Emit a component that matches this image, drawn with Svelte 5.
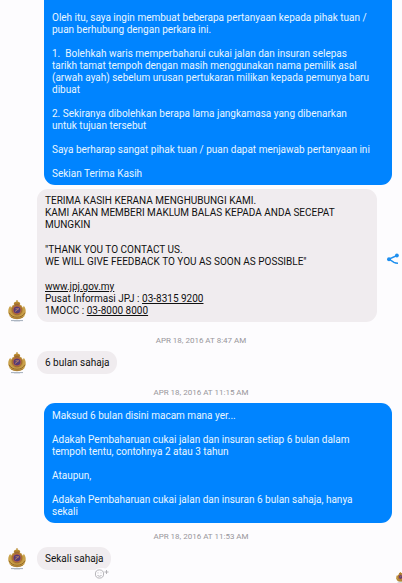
<script lang="ts">
  type Part = { text: string; href?: string };
  type Entry = {
    kind: 'sent' | 'received' | 'time';
    paragraphs: Part[][];
    clipped?: boolean;
    share?: boolean;
    react?: boolean;
  };

  const entries: Entry[] = [
    {
      kind: 'sent',
      clipped: true,
      paragraphs: [
        [{ text: 'Oleh itu, saya ingin membuat beberapa pertanyaan kepada pihak tuan /\npuan berhubung dengan perkara ini.' }],
        [{ text: '1.  Bolehkah waris memperbaharui cukai jalan dan insuran selepas\ntarikh tamat tempoh dengan masih menggunakan nama pemilik asal\n(arwah ayah) sebelum urusan pertukaran milikan kepada pemunya baru\ndibuat' }],
        [{ text: '2. Sekiranya dibolehkan berapa lama jangkamasa yang dibenarkan\nuntuk tujuan tersebut' }],
        [{ text: 'Saya berharap sangat pihak tuan / puan dapat menjawab pertanyaan ini' }],
        [{ text: 'Sekian Terima Kasih' }],
      ],
    },
    {
      kind: 'received',
      share: true,
      paragraphs: [
        [{ text: 'TERIMA KASIH KERANA MENGHUBUNGI KAMI.\nKAMI AKAN MEMBERI MAKLUM BALAS KEPADA ANDA SECEPAT\nMUNGKIN' }],
        [{ text: '"THANK YOU TO CONTACT US.\nWE WILL GIVE FEEDBACK TO YOU AS SOON AS POSSIBLE"' }],
        [
          { text: 'www.jpj.gov.my', href: 'http://www.jpj.gov.my' },
          { text: '\nPusat Informasi JPJ : ' },
          { text: '03-8315 9200', href: 'tel:0383159200' },
          { text: '\n1MOCC : ' },
          { text: '03-8000 8000', href: 'tel:0380008000' },
        ],
      ],
    },
    { kind: 'time', paragraphs: [[{ text: 'APR 18, 2016 AT 8:47 AM' }]] },
    { kind: 'received', paragraphs: [[{ text: '6 bulan sahaja' }]] },
    { kind: 'time', paragraphs: [[{ text: 'APR 18, 2016 AT 11:15 AM' }]] },
    {
      kind: 'sent',
      paragraphs: [
        [{ text: 'Maksud 6 bulan disini macam mana yer...' }],
        [{ text: 'Adakah Pembaharuan cukai jalan dan insuran setiap 6 bulan dalam\ntempoh tentu, contohnya 2 atau 3 tahun' }],
        [{ text: 'Ataupun,' }],
        [{ text: 'Adakah Pembaharuan cukai jalan dan insuran 6 bulan sahaja, hanya\nsekali' }],
      ],
    },
    { kind: 'time', paragraphs: [[{ text: 'APR 18, 2016 AT 11:53 AM' }]] },
    { kind: 'received', react: true, paragraphs: [[{ text: 'Sekali sahaja' }]] },
  ];
</script>

{#snippet crest()}
  <svg class="crest" viewBox="0 0 18 22" aria-hidden="true">
    <path d="M2.200 5.800C.4 8 0 10.500.4 13l1.400 3.600C4 18.600 6.500 19.200 9 19.200s5-.6 7.200-2.600l1.400-3.600c.4-2.500 0-5-1.800-7.200l-1 2.200H3.200z" fill="#c9a14a" />
    <path d="M1.200 12.800c1.200 2.800 4 4.400 7.800 4.400s6.600-1.600 7.800-4.400" fill="none" stroke="#8d6128" stroke-width=".9" />
    <path d="M3.200 17.200c3.400 1.600 8.200 1.600 11.600 0" fill="none" stroke="#a87b33" stroke-width="1" />
    <circle cx="9" cy="10" r="6.200" fill="#c0913c" />
    <circle cx="9" cy="10" r="4.800" fill="none" stroke="#8c5a2c" stroke-width=".7" />
    <circle cx="9" cy="10" r="4.100" fill="#b0564a" />
    <circle cx="9" cy="10" r="3.300" fill="#553c76" />
    <path d="M7 11.500l4-3M7.500 8.800h3" stroke="#c58a68" stroke-width=".8" />
    <path d="M6 4.600C5.200 2.400 7 1.500 8.300 1.700V.2h1.400v1.500c1.300-.2 3.100.7 2.300 2.900z" fill="#b98b30" />
    <path d="M6.300 4.200h5.400" stroke="#8a4c2c" stroke-width=".8" />
    <path d="M3 20.600h12" stroke="#8b99a8" stroke-width=".8" />
    <path d="M6 21.600h6" stroke="#c5cdd6" stroke-width=".6" />
  </svg>
{/snippet}

<main class="thread">
  {#each entries as entry}
    {#if entry.kind === 'time'}
      <div class="time">{entry.paragraphs[0][0].text}</div>
    {:else}
      <div class="row {entry.kind}">
        {#if entry.kind === 'received'}
          {@render crest()}
        {/if}
        <div class="bubble" class:clipped={entry.clipped} class:long={entry.share}>
          {#each entry.paragraphs as parts}
            <p>{#each parts as part}{#if part.href}<a href={part.href}>{part.text}</a>{:else}{part.text}{/if}{/each}</p>
          {/each}
          {#if entry.react}
            <button class="react" aria-label="Add reaction">
              <svg viewBox="0 0 15 12" fill="none" stroke="#a5a3a8" stroke-width=".8">
                <circle cx="5.500" cy="6" r="4.100" />
                <path d="M3.500 7c.7 1.700 3.300 1.700 4 0M4 4.500v.8M7 4.500v.8M12.500 2v4M10.500 4h4" />
              </svg>
            </button>
          {/if}
        </div>
        {#if entry.share}
          <button class="share" aria-label="Share">
            <svg viewBox="0 0 12 12">
              <path d="M10 2.500L2 6.200l5 3.200q1.500.9 4 .9" fill="none" stroke="#1e8fef" stroke-width="1.400" />
              <circle cx="9.900" cy="2.500" r="1.900" fill="#1e8fef" />
              <circle cx="2" cy="6.200" r="2" fill="#1e8fef" />
            </svg>
          </button>
        {/if}
      </div>
    {/if}
  {/each}
  <div class="seen">{@render crest()}</div>
</main>

<style>
  :global(body) {
    margin: 0;
    background: #fdfcfe;
  }

  .thread {
    overflow: hidden;
    font-family: Roboto, "Liberation Sans", sans-serif;
    font-size: 10px;
    line-height: 12px;
    color: #111;
  }

  .row {
    display: flex;
    align-items: flex-end;
  }

  .sent {
    padding: 0 10px 0 44px;
  }

  .received {
    padding-left: 8px;
  }

  .bubble {
    position: relative;
    display: flex;
    flex-direction: column;
    gap: 12px;
    box-sizing: border-box;
    padding: 6px 8px 5px;
    border-radius: 11px;
    background: #f0ecef;
  }

  .sent .bubble {
    flex: 1;
    padding: 7px 8px 5px;
    background: #0084ff;
    color: #e8f6ff;
  }

  .sent .clipped {
    padding-top: 12px;
    border-top-left-radius: 0;
    border-top-right-radius: 0;
  }

  .sent + .received {
    margin-top: 4px;
  }

  .received .bubble {
    margin-left: 11px;
  }

  .received .long {
    flex: 1;
    gap: 13px;
  }

  p {
    margin: 0;
    white-space: pre-wrap;
  }

  a {
    color: inherit;
    text-decoration: underline;
  }

  .time {
    padding: 13px 0 4px;
    font-size: 8px;
    text-align: center;
    color: #98969b;
  }

  .sent + .time {
    padding-top: 8px;
  }

  .crest {
    display: block;
    flex: none;
    width: 18px;
    height: 22px;
  }

  button {
    padding: 0;
    border: 0;
    background: none;
    cursor: pointer;
  }

  button svg {
    display: block;
    width: 100%;
  }

  .share {
    flex: none;
    align-self: center;
    width: 12px;
    margin: 0 3px 0 10px;
    padding-top: 7px;
  }

  .react {
    position: absolute;
    right: 2px;
    bottom: -10px;
    width: 15px;
    height: 12px;
    border-radius: 6px;
    background: #fdfcfe;
  }

  .seen {
    display: flex;
    justify-content: flex-end;
    margin: 2px -3px 0 0;
  }

  .seen .crest {
    width: 9px;
    height: 11px;
  }
</style>
